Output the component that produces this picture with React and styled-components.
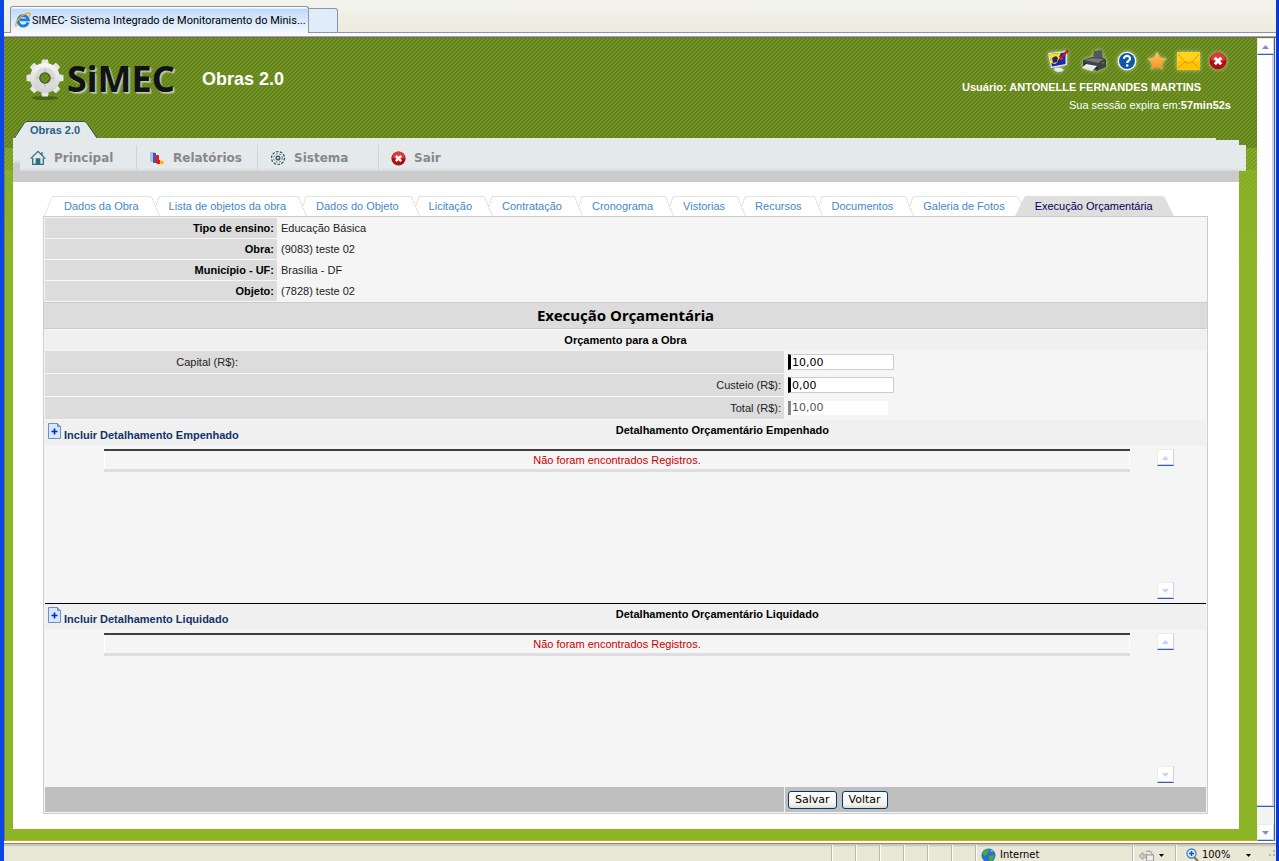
import React from 'react';
import styled, { createGlobalStyle } from 'styled-components';

const GlobalStyle = createGlobalStyle`
  html, body {
    margin: 0;
    padding: 0;
    height: 100%;
  }

  body {
    font-family: 'Liberation Sans', Arial, sans-serif;
    font-size: 11px;
    color: #222;
    overflow: hidden;
  }

  * {
    box-sizing: border-box;
  }

  svg {
    display: block;
    flex-shrink: 0;
  }
`;

const Window = styled.div`
  display: flex;
  flex-direction: column;
  height: 100vh;
  border-left: 4px solid #0a46e4;
  border-right: 3px solid #0838d8;
  background: #ece9d8;
  box-shadow: inset 1px 0 0 #fff;
`;

/* ---------- browser tabs ---------- */

const TabStrip = styled.div`
  flex: none;
  display: flex;
  align-items: flex-end;
  height: 38px;
  padding-left: 6px;
  background: linear-gradient(#f3f3ee, #eeecdf 32px, #8b95a5 32px 33px, #fafafa 33px 36px, #aaa79c 36px 37px, #6b6b60 37px);
`;

const BrowserTab = styled.div`
  display: flex;
  align-items: center;
  gap: 1px;
  width: 299px;
  height: 27px;
  margin-bottom: 5px;
  padding: 0 4px;
  border: 1px solid #8b95a5;
  border-bottom: 0;
  border-radius: 3px 3px 0 0;
  background: linear-gradient(#fff 0 1px, #bfdafa 2px, #f4f9ff);
  font-family: Roboto, Tahoma, sans-serif;
  font-size: 11px;
  color: #000;
  white-space: nowrap;
`;

const NewTab = styled.button`
  width: 29px;
  height: 25px;
  margin-bottom: 5px;
  padding: 0;
  border: 1px solid #8b95a5;
  border-left: 0;
  border-radius: 0 3px 0 0;
  background: #e1ecfa;
`;

/* ---------- page ---------- */

const Viewport = styled.div`
  flex: 1;
  min-height: 0;
  display: flex;
  border-left: 1px solid #77776c;
  border-right: 1px solid #ece9d8;
`;

const Page = styled.div`
  flex: 1;
  min-width: 0;
  padding: 0 18px 0 8px;
  border-bottom: 1px solid #e8a500;
  background:
    linear-gradient(transparent 0 110px, rgba(141, 181, 40, 0.4) 110px 132px, rgba(141, 181, 40, 0.6) 132px 152px, rgba(141, 181, 40, 0.7) 152px, #8db528 225px),
    linear-gradient(135deg, rgba(50, 80, 10, 0.28) 25%, transparent 25% 50%, rgba(50, 80, 10, 0.28) 50% 75%, transparent 75%) 0 0 / 4px 4px,
    linear-gradient(#739422 0 110px, #80a528 110px 132px, #8db528 132px);
`;

const Header = styled.header`
  display: flex;
  justify-content: space-between;
  height: 100px;
`;

const Brand = styled.div`
  display: flex;
  flex-direction: column;
  justify-content: space-between;
  padding-top: 18px;
`;

const BrandRow = styled.div`
  display: flex;
  align-items: center;
  height: 46px;
  padding-left: 10px;
`;

const LogoText = styled.span`
  width: 135px;
  font-family: 'Noto Sans', sans-serif;
  font-size: 36px;
  font-weight: bold;
  line-height: 40px;
  color: #121212;
  text-shadow: 1px 1px 0 #c4ccb4, 2px 2px 1px #a7b38c;
`;

const ModuleTitle = styled.h1`
  margin: 0;
  font-size: 18px;
  line-height: 20px;
  color: #fff;
`;

const ModuleTab = styled.a`
  position: relative;
  width: 84px;
  height: 17px;
  margin-left: 1px;
  padding-left: 16px;
  font-weight: bold;
  line-height: 18px;
  color: #2a5f85;
  text-decoration: none;

  svg {
    position: absolute;
    left: 0;
    top: 0;
  }

  span {
    position: relative;
  }
`;

const UserArea = styled.div`
  display: flex;
  flex-direction: column;
  align-items: flex-end;
  padding: 9px 8px 0 0;
  color: #fff;
`;

const Tools = styled.div`
  display: flex;
  align-items: center;
  gap: 9px;
  height: 28px;
  padding-right: 4px;
`;

const ToolButton = styled.button`
  padding: 0;
  border: 0;
  background: none;
  filter: drop-shadow(0 0 2px rgba(255, 255, 255, 0.6));
`;

const UserName = styled.p`
  margin: 3px 30px 0 0;
  line-height: 18px;
  font-weight: bold;
`;

const Session = styled.p`
  margin: 0;
  line-height: 18px;
`;

/* ---------- main menu ---------- */

const MenuLip = styled.div`
  height: 2px;
  margin-right: 23px;
  background: #e4e9ec;
`;

const MenuBar = styled.nav`
  height: 42px;
  padding-top: 5px;
  background: linear-gradient(#e4e9ec 0 20px, #cbcbcb 24px);
`;

const MenuList = styled.ul`
  display: flex;
  height: 26px;
  margin: 0 -7px 0 7px;
  padding: 0;
  list-style: none;
  background: linear-gradient(#e4e9ec 0 23px, #d3dadd);
`;

const MenuItem = styled.li`
  width: 121px;
  padding: 1px 0 0 12px;

  &:first-child {
    width: 116px;
    padding-left: 10px;
  }

  & + & {
    border-left: 1px solid #cfd6da;
  }
`;

const MenuLink = styled.a`
  display: flex;
  align-items: center;
  gap: 8px;
  height: 24px;
  font-family: 'DejaVu Sans', Verdana, sans-serif;
  font-size: 12px;
  font-weight: bold;
  color: #888;
  text-decoration: none;
`;

/* ---------- content ---------- */

const Content = styled.main`
  padding: 14px 31px 15px 30px;
  background: #fff;
`;

const Tabs = styled.ul`
  display: flex;
  height: 20px;
  margin: 0;
  padding: 0;
  list-style: none;
`;

const TabItem = styled.li`
  display: flex;
`;

const TabLink = styled.a`
  border-top: 1px solid ${(p) => (p.$active ? '#dedede' : '#e3e3e3')};
  background: ${(p) => (p.$active ? '#dedede' : '#fff')};
  line-height: 19px;
  color: ${(p) => (p.$active ? '#000055' : '#4488cc')};
  text-decoration: none;
  white-space: nowrap;
`;

const Card = styled.form`
  border: 1px solid #ccc;
  background: #f5f5f5;
`;

const Info = styled.dl`
  display: grid;
  grid-template-columns: 232px 1fr;
  grid-auto-rows: 20px;
  gap: 1px;
  margin: 0;
  padding: 1px;
  line-height: 20px;

  dt {
    padding-right: 3px;
    background: #dcdcdc;
    text-align: right;
    font-weight: bold;
    color: #000;
  }

  dd {
    margin: 0;
    padding-left: 3px;
  }
`;

const Title = styled.h2`
  margin: 0;
  border: solid #ccc;
  border-width: 1px 0;
  background: #dcdcdc;
  font-family: 'Noto Sans', Tahoma, sans-serif;
  font-size: 15px;
  line-height: 25px;
  text-align: center;
  color: #000;
`;

const Body = styled.div`
  padding: 1px;
`;

const Subtitle = styled.h3`
  margin: 0;
  background: #f0f0f0;
  font-size: 11px;
  line-height: 20px;
  text-align: center;
  color: #000;
`;

const Row = styled.div`
  display: grid;
  grid-template-columns: 1fr 421px;
  gap: 1px;
  height: 22px;
  margin-top: 1px;
`;

const LabelCell = styled.div`
  background: #dcdcdc;
  text-align: right;
  line-height: 22px;
  padding-right: 3px;

  label {
    display: inline-block;
  }
`;

const NarrowLabelCell = styled(LabelCell)`
  text-align: left;

  label {
    width: 193px;
    text-align: right;
  }
`;

const FieldCell = styled.div`
  display: flex;
  align-items: center;
  gap: 5px;
  padding-left: 3px;
`;

const MoneyInput = styled.input`
  width: 106px;
  height: 16px;
  padding: 0 1px;
  border: 1px solid #ccc;
  border-left: 3px solid #000;
  border-radius: 0;
  background: #fff;
  font-family: 'DejaVu Sans', Verdana, sans-serif;
  font-size: 11px;
  line-height: 14px;
  color: #000;
  outline: none;

  &:read-only {
    width: 100px;
    height: 14px;
    border: 0;
    border-left: 3px solid #888;
    color: #555;
  }
`;

const DetailHead = styled.div`
  display: flex;
  height: 25px;
  margin-top: ${(p) => (p.$spaced ? '1px' : '0')};
  padding-left: 3px;
  background: #f0f0f0;
`;

const AddLink = styled.a`
  display: flex;
  align-items: flex-end;
  gap: 3px;
  height: 22px;
  padding-top: 2px;
  font-weight: bold;
  line-height: 14px;
  color: #133368;
  text-decoration: none;

  svg {
    align-self: flex-start;
    margin-top: 1px;
  }
`;

const DetailTitle = styled.h3`
  flex: 1;
  margin: 0;
  font-size: 11px;
  line-height: 20px;
  text-align: center;
  color: #000;
`;

const DetailBody = styled.div`
  height: ${(p) => (p.$last ? '158px' : '159px')};
  padding: 4px 32px 0 59px;
  border-bottom: ${(p) => (p.$last ? '0' : '1px solid #000')};
`;

const ScrollBox = styled.div`
  display: flex;
  justify-content: space-between;
  gap: 27px;
  height: 150px;
`;

const EmptyMessage = styled.p`
  flex: 1;
  height: 23px;
  margin: 0;
  border-top: 2px solid #3f3f3f;
  border-bottom: 3px solid #dedede;
  box-shadow: inset 1px 0 0 #fff, inset -1px 0 0 #fff;
  line-height: 18px;
  text-align: center;
  color: #cc0000;
`;

const Footer = styled.div`
  display: grid;
  grid-template-columns: 1fr 421px;
  gap: 1px;
  height: 25px;

  > div {
    background: #bfbfbf;
  }
`;

const ActionButton = styled.button`
  height: 18px;
  padding: 0 6px;
  border: 1px solid #003c74;
  border-radius: 3px;
  background: linear-gradient(#fff, #f3f2ea 80%, #dcd8cc);
  font-family: 'DejaVu Sans', Verdana, sans-serif;
  font-size: 11px;
  line-height: 14px;
  color: #000;
`;

/* ---------- scroll bars ---------- */

const ScrollColumn = styled.div`
  display: flex;
  flex-direction: column;
  justify-content: space-between;
  width: 17px;
  flex: none;
`;

const PageScroll = styled(ScrollColumn)`
  width: 18px;
  border-right: 1px solid #31639c;
  background: #f3f3f3;
`;

const Thumb = styled.div`
  flex: 1;
  margin-bottom: 18px;
  border: solid #ccccff;
  border-width: 0 2px 1px 0;
  box-shadow: 0 1px 0 #31639c;
  background: #fff;
`;

const ArrowButton = styled.button`
  display: flex;
  align-items: center;
  justify-content: center;
  width: 17px;
  height: 17px;
  padding: 0;
  border: 1px solid #eeeedd;
  border-right-color: #ccccff;
  border-bottom-color: #31639c;
  background: #fff;
  box-shadow: inset 0 -1px 0 #ccccff;
  color: ${(p) => (p.$dim ? '#ccccff' : '#8888cc')};
`;

/* ---------- status bar ---------- */

const StatusBar = styled.footer`
  flex: none;
  display: flex;
  justify-content: flex-end;
  height: 20px;
  padding-top: 4px;
  background: linear-gradient(#fff 0 2px, #8d8b80 2px 3px, #c6c4b8 3px 4px, #e9e7d6 6px);
  font-family: 'DejaVu Sans Condensed', Tahoma, sans-serif;
  font-size: 11px;
  color: #000;
`;

const StatusCell = styled.div`
  display: flex;
  align-items: center;
  gap: 4px;
  width: ${(p) => p.$width};
  padding: 4px 0 0 5px;
  border-left: 1px solid #bab8aa;
  box-shadow: inset 1px 0 0 #fff;
  line-height: 16px;
`;

const ZoomCell = styled(StatusCell)`
  gap: 3px;
  padding-left: 10px;

  span {
    width: 43px;
  }
`;

/* ---------- drawings ---------- */

const IeIcon = () => (
  <svg width="16" height="16" viewBox="0 0 16 16">
    <path d="M13.2 10.5A5.2 5.2 0 1 1 13.4 7.8H5" fill="none" stroke="#1d7fd6" strokeWidth="2.8" />
    <path d="M1.5 14.6C-1 12 4 4 12.5 1.2c3-.9 3 1.4 1.6 3.4" fill="none" stroke="#f0a51c" strokeWidth="1.3" />
  </svg>
);

const teeth = [0, 45, 90, 135, 180, 225, 270, 315];

const LogoGear = () => (
  <svg width="44" height="44" viewBox="0 0 44 44">
    <defs>
      <linearGradient id="steel" x1="0" y1="0" x2="0" y2="1">
        <stop offset="0" stopColor="#f7f7f7" />
        <stop offset="1" stopColor="#cfcfcf" />
      </linearGradient>
    </defs>
    <ellipse cx="22" cy="41" rx="13" ry="2" fill="#37480f" opacity="0.6" />
    <g fill="#e6e6e6">
      {teeth.map((a) => (
        <path key={a} d="M18 9l1-6.500h6l1 6.500z" transform={`rotate(${a} 22 21)`} />
      ))}
    </g>
    <path fill="url(#steel)" fillRule="evenodd" d="M22 6a15 15 0 1 0 0 30a15 15 0 1 0 0-30zM22 16a5 5 0 1 1 0 10a5 5 0 1 1 0-10z" />
    <circle cx="22" cy="21" r="8" fill="none" stroke="#dadada" strokeWidth="5" />
    <circle cx="22" cy="21" r="5.200" fill="none" stroke="#3d5210" strokeWidth="1.200" />
    <path d="M22 12.500v2M22 27.500v2M13.500 21h2M28.500 21h2" stroke="#999" />
  </svg>
);

const MonitorIcon = () => (
  <svg width="24" height="24" viewBox="0 0 24 24">
    <path d="M1 4l19-2v14L4 19z" fill="#dfe6ee" />
    <path d="M2.500 5L18.500 3.500v11.500L5 17.400z" fill="#1a27b5" />
    <path d="M2.500 5L14 4l-2 4 4 1-8 6-4-1z" fill="#ffdf13" />
    <path d="M5 9l4-2 2 2-1 4-4 1z" fill="#1b257d" />
    <path d="M21 1.500L13 10" stroke="#c8161a" strokeWidth="2.400" />
    <path d="M13 10l-2 3" stroke="#222" strokeWidth="1.400" />
    <path d="M8 19h6l3 2c-2 2.500-8 2.500-10 0z" fill="#e8ebee" />
  </svg>
);

const PrinterIcon = () => (
  <svg width="28" height="24" viewBox="0 0 28 24">
    <path d="M14 2l8-1 1 10-10-1z" fill="#54575b" />
    <path d="M3 11l9-3 12 1 2 2v7l-9 4-14-5z" fill="#3f4246" />
    <path d="M4 11l9-2 11 1-6 4z" fill="#75787d" />
    <path d="M4 14l14 4v2L4 16z" fill="#222326" />
    <path d="M6 15l11 2-5 5-10-3z" fill="#f3f5f7" />
    <path d="M5 17l9 2M4 18.500l8 2" stroke="#c4c8cc" strokeWidth="0.600" />
    <path d="M22 14.500l2-1" stroke="#62b13a" />
  </svg>
);

const HelpIcon = () => (
  <svg width="20" height="20" viewBox="0 0 20 20">
    <circle cx="10" cy="10" r="9.300" fill="#fff" />
    <circle cx="10" cy="10" r="8" fill="#0f57a8" />
    <path d="M7 7.800c0-4 6.300-3.600 6 0c-.2 1.900-2.800 1.900-2.800 4.200" fill="none" stroke="#fff" strokeWidth="2.200" />
    <circle cx="10.200" cy="14.500" r="1.300" fill="#fff" />
  </svg>
);

const StarIcon = () => (
  <svg width="22" height="22" viewBox="0 0 22 22">
    <defs>
      <linearGradient id="gold" x1="0" y1="0" x2="0" y2="1">
        <stop offset="0" stopColor="#ffc862" />
        <stop offset="1" stopColor="#fb8f1a" />
      </linearGradient>
    </defs>
    <path d="M11 1.500l2.900 6.300 6.900.8-5.100 4.600 1.400 6.800-6.100-3.400-6.100 3.400 1.400-6.800L1.200 8.600l6.900-.8z" fill="url(#gold)" />
  </svg>
);

const MailIcon = () => (
  <svg width="23" height="18" viewBox="0 0 23 18">
    <rect width="23" height="18" fill="#ffc400" />
    <rect width="23" height="9" fill="#ffd21c" />
    <path d="M1 2l7 8q3.500 3 7 0l7-8M1 16l7-6M22 16l-7-6" fill="none" stroke="#e09a00" />
  </svg>
);

const CloseIcon = ({ size }) => (
  <svg width={size} height={size} viewBox="0 0 18 18">
    <circle cx="9" cy="9" r="8.500" fill="#b30d12" />
    <path d="M1.500 8a7.500 7.500 0 0 1 15 0q-7.500 3-15 0" fill="#dd3a3a" />
    <path d="M5.800 5.800l6.400 6.400M12.200 5.800l-6.400 6.400" stroke="#fff" strokeWidth="3" />
  </svg>
);

const HomeIcon = () => (
  <svg width="16" height="16" viewBox="0 0 16 16" fill="none" stroke="#2f6f80" strokeWidth="1.300">
    <path d="M.6 8.600L8 1.300l7.400 7.300M12 5V2" />
    <path d="M2.700 8v6.400h10.600V8" />
    <path d="M6.300 14V9h3.400v5z" fill="#2f6f80" />
  </svg>
);

const ChartIcon = () => (
  <svg width="16" height="16" viewBox="0 0 16 16">
    <rect x="1" y="2" width="5" height="10" rx="1" fill="#a5c0ee" />
    <rect x="4" y="3" width="3" height="10" fill="#3a5cb8" />
    <rect x="6.500" y="5" width="3.500" height="8" fill="#e0251f" />
    <circle cx="9.500" cy="12" r="2.200" fill="#d51717" />
    <circle cx="12.800" cy="12.500" r="2" fill="#f9b81c" />
  </svg>
);

const CogIcon = () => (
  <svg width="16" height="16" viewBox="0 0 16 16" fill="none" stroke="#3c5e63">
    <circle cx="8" cy="8" r="5.500" stroke="#f4f7f8" strokeWidth="2" />
    <circle cx="8" cy="8" r="6.400" strokeWidth="1.400" strokeDasharray="2.600 1.300" />
    <circle cx="8" cy="8" r="4.300" strokeWidth="0.800" strokeDasharray="2 1.500" />
    <circle cx="8" cy="8" r="1.800" strokeWidth="1.500" />
  </svg>
);

const AddIcon = () => (
  <svg width="13" height="16" viewBox="0 0 13 16">
    <path d="M.5.500h9l3 3v12H.5z" fill="#d6e8fc" stroke="#6f8cc4" />
    <path d="M9.500.500v3h3" fill="#86a4d6" stroke="#6f8cc4" />
    <path d="M6.500 5.500v6M3.500 8.500h6" stroke="#0a1fd6" strokeWidth="1.600" />
  </svg>
);

const GlobeIcon = () => (
  <svg width="15" height="15" viewBox="0 0 15 15">
    <circle cx="7.500" cy="7.500" r="7" fill="#2f6fc6" />
    <path d="M2 4q4-4 6-3l-1 4-3 3q-3-1-2-4zM8 8l5-1q1 3-3 6.500l-2-2z" fill="#3fae43" />
    <path d="M9 3l2-1 1 2z" fill="#9fd2f5" />
  </svg>
);

const LockIcon = () => (
  <svg width="17" height="15" viewBox="0 0 17 15">
    <path d="M1 8l4-4v2.500h4v3H5V12z" fill="#c9c9c6" stroke="#aaa" />
    <path d="M8 4a3.500 3.500 0 0 1 6 2v2" fill="none" stroke="#b0b0ad" strokeWidth="1.500" />
    <rect x="8.500" y="7" width="7" height="6" fill="#eee" stroke="#999" />
  </svg>
);

const ZoomIcon = () => (
  <svg width="13" height="14" viewBox="0 0 13 14">
    <path d="M8 9l4 4" stroke="#8a6a45" strokeWidth="2" />
    <circle cx="5.500" cy="5.500" r="4.500" fill="#dcecff" stroke="#4a82cc" strokeWidth="1.400" />
    <path d="M5.500 3v5M3 5.500h5" stroke="#1550b8" strokeWidth="1.500" />
  </svg>
);

const CaretIcon = () => (
  <svg width="5" height="3" viewBox="0 0 5 3">
    <path d="M0 0h5L2.500 3z" fill="#000" />
  </svg>
);

const GripIcon = () => (
  <svg width="22" height="10" viewBox="0 0 22 10">
    <path d="M19 0h2v2h-2zM15 4h2v2h-2zM19 4h2v2h-2z" fill="#b8b4a2" />
  </svg>
);

const ArrowIcon = ({ down }) => (
  <svg width="7" height="4" viewBox="0 0 7 4">
    <path d={down ? 'M0 0h7L3.500 4z' : 'M0 4h7L3.500 0z'} fill="currentColor" />
  </svg>
);

const ModuleShape = () => (
  <svg width="84" height="17" viewBox="0 0 84 17">
    <path d="M.5 17L10 2.500Q11.500.500 13 .5h57q2 0 3 2L83 17" fill="#e4e9ec" stroke="#2f5268" />
  </svg>
);

const TabStart = () => (
  <svg width="21" height="20" viewBox="0 0 21 20">
    <path d="M1.500 20L9 1" stroke="#ccc" strokeDasharray="1 1" fill="none" />
    <path d="M9 .5h12" stroke="#e3e3e3" />
  </svg>
);

const TabJoint = ({ active }) => (
  <svg width="30" height="20" viewBox="0 0 30 20">
    <path d="M0 .5h12M20 .5h10" stroke="#e3e3e3" />
    {active && <path d="M10 20L19 1.500Q20 0 22 0h8v20z" fill="#dedede" />}
    <path d={active ? 'M12.500 1L16 7' : 'M12.500 1L20.500 20M20 1L17 10'} stroke="#c4c4c4" strokeDasharray="1 1" fill="none" />
  </svg>
);

const TabEnd = () => (
  <svg width="21" height="20" viewBox="0 0 21 20">
    <path d="M0 0h9q2 0 3 2l9 18H0z" fill="#dedede" />
  </svg>
);

/* ---------- data ---------- */

const menu = [
  { text: 'Principal', icon: <HomeIcon /> },
  { text: 'Relatórios', icon: <ChartIcon /> },
  { text: 'Sistema', icon: <CogIcon /> },
  { text: 'Sair', icon: <CloseIcon size={15} /> },
];

const tabs = [
  'Dados da Obra',
  'Lista de objetos da obra',
  'Dados do Objeto',
  'Licitação',
  'Contratação',
  'Cronograma',
  'Vistorias',
  'Recursos',
  'Documentos',
  'Galeria de Fotos',
  'Execução Orçamentária',
];

const info = [
  ['Tipo de ensino:', 'Educação Básica'],
  ['Obra:', '(9083) teste 02'],
  ['Município - UF:', 'Brasília - DF'],
  ['Objeto:', '(7828) teste 02'],
];

const tools = [
  ['Alterar tema', <MonitorIcon />],
  ['Imprimir', <PrinterIcon />],
  ['Ajuda', <HelpIcon />],
  ['Favoritos', <StarIcon />],
  ['Mensagens', <MailIcon />],
  ['Fechar', <CloseIcon size={18} />],
];

const Detail = ({ name, last }) => (
  <section>
    <DetailHead $spaced={!last}>
      <AddLink href="#">
        <AddIcon />
        Incluir Detalhamento {name}
      </AddLink>
      <DetailTitle>Detalhamento Orçamentário {name}</DetailTitle>
    </DetailHead>
    <DetailBody $last={last}>
      <ScrollBox>
        <EmptyMessage>Não foram encontrados Registros.</EmptyMessage>
        <ScrollColumn>
          <ArrowButton type="button" aria-label="Subir" $dim>
            <ArrowIcon />
          </ArrowButton>
          <ArrowButton type="button" aria-label="Descer" $dim>
            <ArrowIcon down />
          </ArrowButton>
        </ScrollColumn>
      </ScrollBox>
    </DetailBody>
  </section>
);

const App = () => {
  return (
    <Window>
      <GlobalStyle />
      <TabStrip>
        <BrowserTab>
          <IeIcon />
          SIMEC- Sistema Integrado de Monitoramento do Minis...
        </BrowserTab>
        <NewTab aria-label="Nova guia" />
      </TabStrip>

      <Viewport>
        <Page>
          <Header>
            <Brand>
              <BrandRow>
                <LogoGear />
                <LogoText>SiMEC</LogoText>
                <ModuleTitle>Obras 2.0</ModuleTitle>
              </BrandRow>
              <ModuleTab href="#">
                <ModuleShape />
                <span>Obras 2.0</span>
              </ModuleTab>
            </Brand>
            <UserArea>
              <Tools>
                {tools.map(([label, icon]) => (
                  <ToolButton key={label} type="button" aria-label={label}>
                    {icon}
                  </ToolButton>
                ))}
              </Tools>
              <UserName>Usuário: ANTONELLE FERNANDES MARTINS</UserName>
              <Session>
                Sua sessão expira em:<b>57min52s</b>
              </Session>
            </UserArea>
          </Header>

          <MenuLip />
          <MenuBar>
            <MenuList>
              {menu.map((item) => (
                <MenuItem key={item.text}>
                  <MenuLink href="#">
                    {item.icon}
                    {item.text}
                  </MenuLink>
                </MenuItem>
              ))}
            </MenuList>
          </MenuBar>

          <Content>
            <Tabs>
              {tabs.map((text, index) => {
                const active = index === tabs.length - 1;
                return (
                  <TabItem key={text}>
                    {index === 0 ? <TabStart /> : <TabJoint active={active} />}
                    <TabLink href="#" $active={active}>{text}</TabLink>
                    {active && <TabEnd />}
                  </TabItem>
                );
              })}
            </Tabs>

            <Card onSubmit={(e) => e.preventDefault()}>
              <Info>
                {info.map(([label, value]) => (
                  <React.Fragment key={label}>
                    <dt>{label}</dt>
                    <dd>{value}</dd>
                  </React.Fragment>
                ))}
              </Info>
              <Title>Execução Orçamentária</Title>
              <Body>
                <Subtitle>Orçamento para a Obra</Subtitle>
                <Row>
                  <NarrowLabelCell>
                    <label htmlFor="capital">Capital (R$):</label>
                  </NarrowLabelCell>
                  <FieldCell>
                    <MoneyInput id="capital" defaultValue="10,00" />
                  </FieldCell>
                </Row>
                <Row>
                  <LabelCell>
                    <label htmlFor="custeio">Custeio (R$):</label>
                  </LabelCell>
                  <FieldCell>
                    <MoneyInput id="custeio" defaultValue="0,00" />
                  </FieldCell>
                </Row>
                <Row>
                  <LabelCell>
                    <label htmlFor="total">Total (R$):</label>
                  </LabelCell>
                  <FieldCell>
                    <MoneyInput id="total" value="10,00" readOnly />
                  </FieldCell>
                </Row>
                <Detail name="Empenhado" />
                <Detail name="Liquidado" last />
                <Footer>
                  <div />
                  <FieldCell>
                    <ActionButton type="submit">Salvar</ActionButton>
                    <ActionButton type="button">Voltar</ActionButton>
                  </FieldCell>
                </Footer>
              </Body>
            </Card>
          </Content>
        </Page>

        <PageScroll>
          <ArrowButton type="button" aria-label="Rolar para cima">
            <ArrowIcon />
          </ArrowButton>
          <Thumb />
          <ArrowButton type="button" aria-label="Rolar para baixo">
            <ArrowIcon down />
          </ArrowButton>
        </PageScroll>
      </Viewport>

      <StatusBar>
        {[0, 1, 2, 3, 4, 5].map((n) => (
          <StatusCell key={n} $width="24px" />
        ))}
        <StatusCell $width="157px">
          <GlobeIcon />
          Internet
        </StatusCell>
        <StatusCell $width="43px">
          <LockIcon />
          <CaretIcon />
        </StatusCell>
        <ZoomCell $width="101px">
          <ZoomIcon />
          <span>100%</span>
          <CaretIcon />
          <GripIcon />
        </ZoomCell>
      </StatusBar>
    </Window>
  );
};

export default App;
